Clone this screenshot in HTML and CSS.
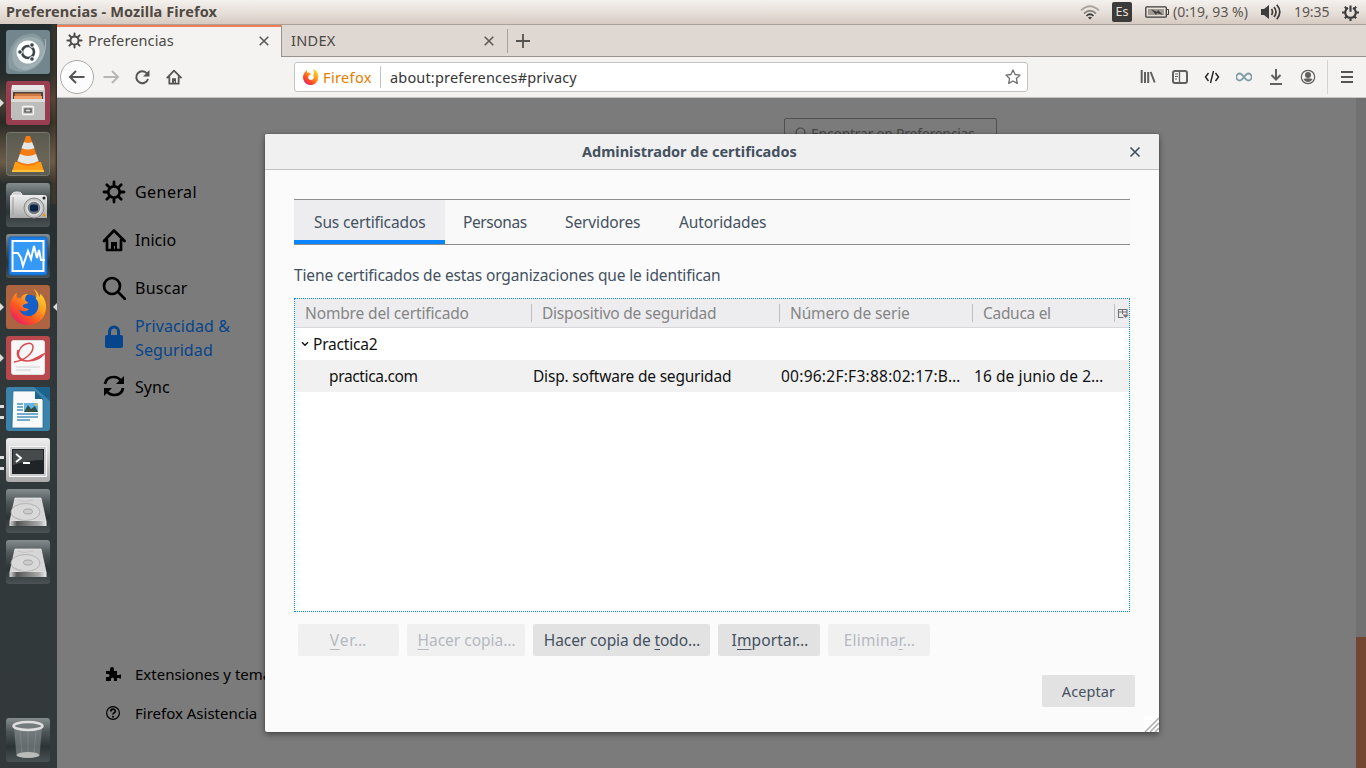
FILE: index.html
```html
<!DOCTYPE html>
<html lang="es">
<head>
<meta charset="utf-8">
<title>Preferencias - Mozilla Firefox</title>
<link rel="stylesheet" href="styles.css">
</head>
<body>
<svg class="defs" aria-hidden="true">
<defs>
<linearGradient id="glass" x1="0" y1="0" x2="0" y2="1"><stop offset="0" stop-color="#858d8f"/><stop offset=".3" stop-color="#505759"/><stop offset=".65" stop-color="#2c3335"/><stop offset="1" stop-color="#4a5254"/></linearGradient>
<linearGradient id="silver" x1="0" y1="0" x2="0" y2="1"><stop offset="0" stop-color="#eee"/><stop offset="1" stop-color="#aaa"/></linearGradient>
<linearGradient id="fox" x1="1" y1="0" x2=".2" y2="1"><stop offset="0" stop-color="#ffe93b"/><stop offset=".4" stop-color="#ffa21e"/><stop offset=".7" stop-color="#ff5522"/><stop offset="1" stop-color="#e3196b"/></linearGradient>
<linearGradient id="metal" x1="0" x2="1"><stop offset="0" stop-color="#ddd"/><stop offset=".2" stop-color="#555"/><stop offset=".8" stop-color="#aaa"/><stop offset="1" stop-color="#eee"/></linearGradient>
<symbol id="gear" viewBox="0 0 24 24"><circle cx="12" cy="12" r="5.700" fill="none" stroke="currentColor" stroke-width="2.700"/><path d="M12 2v3M12 19v3M2 12h3M19 12h3M4.800 4.800l2.300 2.300M16.900 16.900l2.300 2.300M4.800 19.200l2.300-2.300M16.900 7.100l2.300-2.300" stroke="currentColor" stroke-width="2.800" stroke-linecap="round"/></symbol>
<symbol id="home" viewBox="0 0 24 24"><path d="M2 13 12 2.500 22.500 13M5 12v10h14V12" fill="none" stroke="currentColor" stroke-width="2.700" stroke-linecap="round" stroke-linejoin="round"/><path d="M9 22v-8h6v8h-2v-4h-1v4z" fill="currentColor"/></symbol>
<symbol id="disk" viewBox="0 0 44 44"><path d="M9 9h26l5 23H4z" fill="#d6d6d6" stroke="#eee" stroke-width=".7"/><path d="M3.500 32h37v5h-37z" fill="url(#metal)"/><ellipse cx="19.500" cy="23" rx="14.500" ry="8.500" fill="#d9d9d9" stroke="#aaa" stroke-width=".8"/><ellipse cx="22" cy="22.500" rx="4.500" ry="2.500" fill="#ccc" stroke="#999" stroke-width=".8"/><path d="M12 11c6 3 12 0 15 0M6 28c3-1 5 2 10 2" fill="none" stroke="#bbb" stroke-width=".7"/></symbol>
<symbol id="flame" viewBox="0 0 40 40"><circle cx="21" cy="19" r="12" fill="#165fc9"/><path d="M26 1c4 5 3 8 2 10 5 4 4 15-4 18-7 2-12-2-13-6 4 3 8 1 10-1l-4-1c-3-1-3-3-1-4l4-1c0-2-3-2-3-4 0-3 1-4 3-6-5 0-7 3-8 5L8 10V5C4 8 1 14 1 21c0 10 8 18 19 18s19-8 19-19c0-7-3-11-6-14l-1 4c-1-5-3-7-6-9z" fill="url(#fox)"/></symbol>
</defs>
</svg>

<header class="panel">
  <span class="panel-title">Preferencias - Mozilla Firefox</span>
  <div class="indicators">
    <svg class="wifi" viewBox="0 0 20 16" width="20" height="16" fill="none"><path d="M1 6.500Q10-2 19 6.500" stroke="#aaa49d" stroke-width="1.700"/><path d="M4 9.500Q10 4 16 9.500" stroke="#8b8680" stroke-width="1.700"/><path d="M6.500 12Q10 8.500 13.500 12" stroke="#3c3c3c" stroke-width="1.700"/><path d="m8 13.500 2 2 2-2q-2-1.500-4 0" fill="#3c3c3c"/></svg>
    <span class="lang">Es</span>
    <svg class="battery" viewBox="0 0 24 12" width="24" height="12"><rect x=".8" y=".8" width="20.500" height="10.400" rx="1" fill="none" stroke="#3c3c3c" stroke-width="1.300"/><path d="M3 3h16v6H3z" fill="#a39c95"/><path d="M22 3.500h1.500v5H22" fill="none" stroke="#3c3c3c"/><path d="m6 3 6 3 1-2 5 5-6-2-1 2z" fill="#3c3c3c"/></svg>
    <span class="charge">(0:19, 93 %)</span>
    <svg class="volume" viewBox="0 0 20 18" width="20" height="18" fill="none" stroke="#3c3c3c" stroke-width="1.700"><path d="M0 6h3l5-4v14l-5-4H0z" fill="#3c3c3c" stroke="none"/><path d="M10.500 6q2 3 0 6M13 4q4 5 0 10M15.800 1.800q6 7 0 14.400"/></svg>
    <span class="clock">19:35</span>
    <svg class="session" viewBox="0 0 24 24" width="17" height="17" fill="none" stroke="#3c3c3c" stroke-width="3"><path d="M8.500 5.500a7.500 7.500 0 1 0 7 0M12 2v9M0 12h5M19 12h5M4 4l3 3M17 17l3 3M4 20l3-3M17 7l3-3M12 19v5"/></svg>
  </div>
</header>

<div class="desktop">
<aside class="launcher">
  <div class="apps">
    <svg class="app" viewBox="0 0 44 44"><rect width="44" height="44" rx="3" fill="#74868d"/><path d="M3 38C-1 15 13 2 29 4c9 3 12 14 8 24-5 12-22 18-34 10" fill="#879a9f"/><path d="M8 34C2 18 12 7 25 7s18 14 10 24-20 13-27 3" fill="#9babb0"/><path d="M39 9c3 15-7 28-22 29" fill="none" stroke="#adb9bc"/><circle cx="22" cy="22" r="11.500" fill="#fff"/><circle cx="22" cy="22" r="6" fill="none" stroke="#3b474d" stroke-width="2.600"/><g fill="#3b474d" stroke="#fff"><circle cx="14" cy="22" r="2.300"/><circle cx="26" cy="15" r="2.300"/><circle cx="26" cy="29" r="2.300"/></g></svg>
    <div class="slot running"><svg class="app" viewBox="0 0 44 44"><rect width="44" height="44" rx="3" fill="#993e51"/><path d="M6 4h32l1 6H5z" fill="#e7e7e5"/><path d="M5 9h34v28H5z" fill="#c6c6c3"/><path d="M7 11h30v8H7z" fill="#4c423b"/><path d="M9 12.500h26V19H8z" fill="#d07a42"/><path d="M8 15h28v4H8z" fill="#f0a068"/><path d="M5 18h34v21H6z" fill="#bdbdbb"/><path d="M5 18h34v3H5z" fill="#dcdcda"/><rect x="16.500" y="25.500" width="11" height="8" rx="1" fill="#bbb" stroke="#f5f5f5" stroke-width="1.300"/><path d="M19 28h6v3h-6z" fill="#ddd" stroke="#444" stroke-width="1.200"/></svg></div>
    <svg class="app" viewBox="0 0 44 44"><rect x=".5" y=".5" width="43" height="43" rx="3" fill="#6a6b62" fill-opacity=".65" stroke="#757770"/><path d="m9 30-3 10h32l-3-10z" fill="#ff9d15"/><path d="M20 4h4l9 26q-11 8-22 0z" fill="#f47c12"/><path d="m18 10-2.500 6q6 3 13 0L26 10q-4 2-8 0M14 22l-2.500 7q10 6 21 0L30 22q-8 4-16 0" fill="#e3e7e8"/><path d="M6 39h32" stroke="#ffc23a" stroke-width="2"/></svg>
    <svg class="app" viewBox="0 0 44 44"><rect width="44" height="44" rx="3" fill="url(#glass)"/><path d="M5 12h33q3 0 3 3v20H4V13z" fill="url(#silver)"/><path d="M6 12q0-3 5-3t5 3z" fill="#ccc" stroke="#eee"/><path d="M7 14v18" stroke="#999"/><circle cx="28" cy="25" r="10" fill="#c3c3c3" stroke="#888"/><circle cx="28" cy="25" r="7" fill="#747b81" stroke="#ddd" stroke-width="1.500"/><rect x="24" y="21.500" width="8" height="7" rx="2" fill="#0a2448"/><circle cx="38" cy="15" r="1.500" fill="#222"/><circle cx="38" cy="32" r="1.500" fill="#e8902a"/></svg>
    <svg class="app" viewBox="0 0 44 44"><rect width="44" height="44" rx="3" fill="url(#glass)"/><rect x="3" y="3" width="38" height="38" rx="2" fill="#1c7fe6" stroke="#1364bd"/><path d="M6.500 7h31v30h-31z" fill="#359af6" stroke="#fff" stroke-width="2"/><path d="M7 19h5l3 5 2 8 5-15 3 8 3-13 3 12 2-8 2 10h4" fill="none" stroke="#fff" stroke-width="2"/></svg>
    <div class="slot running focused"><svg class="app" viewBox="0 0 44 44"><rect width="44" height="44" rx="3" fill="#ac6540"/><use href="#flame" x="3" y="3" width="38" height="38"/></svg></div>
    <div class="slot running"><svg class="app" viewBox="0 0 44 44"><rect width="44" height="44" rx="3" fill="#b9484d"/><rect x="5.500" y="4.500" width="33" height="34" rx="2" fill="#f7f7f7" stroke="#ddd"/><path d="M8 26C20 24 27 17 27 11c0-6-10-4-13 2-4 7 0 11 7 12 6 0 12-5 17-7-4 5-10 7-17 7-8 0-11-5-9-11" fill="none" stroke="#d94b50" stroke-width="1.500"/><path d="M10 31h24M10 34h15" stroke="#d0d0d0"/></svg></div>
    <div class="slot double"><svg class="app" viewBox="0 0 44 44"><rect width="44" height="44" rx="3" fill="#3c83ab"/><path d="M7 4h22l8 9v28H6z" fill="#f8f9fa" stroke="#1c638b" stroke-width=".7"/><path d="M29 4v8h8M28 0h16v14z" fill="#1d638c"/><path d="M11 17h6M11 20h6M11 23h6M11 27h21M11 30h21M11 33h13" stroke="#4993bd" stroke-width="1.600"/><path d="M18 16h14v9H18z" fill="#65b5e5"/><path d="m18 25 4-7 3 4 4-3 3 6z" fill="#325143"/><circle cx="30.500" cy="17.500" r="1.200" fill="#f2c52e"/></svg></div>
    <div class="slot double"><svg class="app" viewBox="0 0 44 44"><rect width="44" height="44" rx="3" fill="url(#silver)"/><path d="M3.500 8.500h37v30h-37z" fill="#ccc" stroke="#f7f7f7"/><path d="M6 11h32v25H6z" fill="#202426"/><path d="M7 12h30v10q-14 0-30 5z" fill="#474a4b"/><path d="m10 16 5 4-5 4M17 25h7" fill="none" stroke="#fff" stroke-width="1.800"/></svg></div>
    <svg class="app" viewBox="0 0 44 44"><rect width="44" height="44" rx="3" fill="url(#glass)"/><use href="#disk" width="44" height="44"/></svg>
    <svg class="app" viewBox="0 0 44 44"><rect width="44" height="44" rx="3" fill="url(#glass)"/><use href="#disk" width="44" height="44"/></svg>
  </div>
  <svg class="app" viewBox="0 0 44 44"><rect width="44" height="44" rx="3" fill="url(#glass)"/><path d="m8 10 2.500 28q11 4 23 0L36 10z" fill="#8b9192" fill-opacity=".6"/><path d="m14 12 2 24M22 12v25M30 12l-2 24" stroke="#a3a8a8" stroke-opacity=".3"/><ellipse cx="22" cy="37" rx="11.500" ry="3" fill="#b9bcb9"/><ellipse cx="22" cy="8" rx="14.500" ry="4" fill="#737b7c" stroke="#dedede" stroke-width="2.500"/></svg>
</aside>

<main class="browser">
  <div class="tabstrip">
    <div class="tab active"><svg class="tab-gear" width="17" height="17"><use href="#gear"/></svg><span class="tab-name">Preferencias</span><svg class="tab-close" width="10" height="10" viewBox="0 0 10 10"><path d="m.7.7 8.600 8.600M9.300.7.7 9.300"/></svg></div>
    <div class="tab other"><span class="tab-index">INDEX</span><svg class="tab-close" width="10" height="10" viewBox="0 0 10 10"><path d="m.7.7 8.600 8.600M9.300.7.7 9.300"/></svg></div>
    <div class="newtab"><svg width="14" height="14" viewBox="0 0 14 14"><path d="M7 0v14M0 7h14" stroke="#55524f" stroke-width="1.800"/></svg></div>
  </div>
  <div class="navbar">
    <span class="back"><svg width="18" height="16" viewBox="0 0 18 16"><path d="M8 2 2 8l6 6M2 8h14.500"/></svg></span>
    <svg class="forward" width="18" height="16" viewBox="0 0 18 16"><path d="m10 2 6 6-6 6M16 8H1.500"/></svg>
    <svg class="reload" width="16" height="16" viewBox="0 0 16 16"><path d="M13 4.500a6 6 0 1 0 1 5.500"/><path d="M15.500 1v6.500H9z" fill="#555" stroke="none"/></svg>
    <svg class="gohome" width="16" height="16"><use href="#home"/></svg>
    <div class="urlbar">
      <svg width="16" height="16" viewBox="0 0 16 16"><path d="M4 1v3c2-1 3 0 4 1C7 6 7 7 8 8c3-1 4-4 2-8 5 2 6 6 5 10-1 4-4 6-8 6S0 12 0 8c0-3 2-5 4-7" fill="url(#fox)"/><circle cx="8" cy="8.200" r="2.700" fill="#fff"/></svg>
      <span class="brand">Firefox</span><span class="url">about:preferences#privacy</span>
      <svg class="star" width="16" height="16" viewBox="0 0 16 16"><path d="m8 1 2.100 4.500 4.900.6-3.600 3.400.9 4.900L8 12l-4.300 2.400.9-4.900L1 6.100l4.900-.6z" fill="none" stroke="#6c6c6c" stroke-width="1.300" stroke-linejoin="round"/></svg>
    </div>
    <div class="tools">
      <svg width="16" height="16" viewBox="0 0 16 16"><path d="M1.700 1v13M5 3v11M8.200 3v11m2.500-11 4 10.500"/></svg>
      <svg width="16" height="16" viewBox="0 0 16 16"><rect x="1" y="2" width="14" height="12" rx="2"/><path d="M7.500 2v12" stroke-width="1.300"/><path d="M3 5h3M3 7.500h3M3 10h2" stroke-width="1"/></svg>
      <svg width="16" height="16" viewBox="0 0 16 16"><path d="M4.500 4 1.500 8l3 4M11.500 4l3 4-3 4M9.500 2l-3 12" stroke="#202020" stroke-width="1.400"/></svg>
      <svg width="16" height="16" viewBox="0 0 16 16"><path d="M8 8C5.500 4.800 4.500 4.500 3.800 4.500a3.500 3.500 0 0 0 0 7C4.500 11.500 5.500 11.200 8 8s3.500-3.500 4.200-3.500a3.500 3.500 0 0 1 0 7C11.500 11.500 10.500 11.200 8 8" stroke="#7f9aa4" stroke-width="1.800"/></svg>
      <svg width="16" height="16" viewBox="0 0 16 16"><path d="M8 0v10M3.500 6 8 10.500 12.500 6M2 15h12"/></svg>
      <svg width="16" height="16" viewBox="0 0 16 16"><circle cx="8" cy="8" r="6.700" stroke-width="1.200"/><circle cx="8" cy="6" r="3" fill="#606060" stroke="none"/><path d="M3.500 10q4.500-1.500 9 0-1.500 3-4.500 3t-4.500-3" fill="#606060" stroke="none"/></svg>
    </div>
    <span class="menu"><svg width="12" height="14" viewBox="0 0 12 14"><path d="M0 2h12M0 7h12M0 12h12"/></svg></span>
  </div>

  <div class="page">
    <nav class="categories">
      <div class="cat"><svg width="24" height="24"><use href="#gear"/></svg><span class="t-general">General</span></div>
      <div class="cat"><svg width="24" height="24"><use href="#home"/></svg><span>Inicio</span></div>
      <div class="cat"><svg width="24" height="24" viewBox="0 0 24 24" fill="none" stroke="#000" stroke-width="2.700"><circle cx="10" cy="10" r="8"/><path d="m16 16 7 7" stroke-linecap="round"/></svg><span class="t-buscar">Buscar</span></div>
      <div class="cat selected"><svg width="24" height="24" viewBox="0 0 24 24"><rect x="3" y="10" width="18" height="13" rx="2" fill="#06458b"/><path d="M7.500 11V6.500a4.500 4.500 0 0 1 9 0V11" fill="none" stroke="#06458b" stroke-width="3"/></svg><span>Privacidad &amp;<br>Seguridad</span></div>
      <div class="cat sync"><svg width="24" height="24" viewBox="0 0 24 24" fill="none" stroke="#000" stroke-width="2.700"><path d="M3 10q1-7 9-7 5 0 8 5M21 14q-1 7-9 7-5 0-8-5"/><path d="M22 2v8h-8zM2 22v-8h8z" fill="#000" stroke="none"/></svg><span>Sync</span></div>
      <div class="cat small ext"><svg width="16" height="16" viewBox="0 0 16 16"><path d="M1 5h4V3a2 2 0 1 1 4 0v2h3v4h2a2 2 0 1 1 0 3h-2v3H9v-2a1.500 1.500 0 0 0-3 0v2H1v-4h2a1.500 1.500 0 0 0 0-3H1z" fill="#000"/></svg><span>Extensiones y temas</span></div>
      <div class="cat small"><svg width="16" height="16" viewBox="0 0 16 16" fill="none" stroke="#000"><circle cx="8" cy="8" r="6.400" stroke-width="1.200"/><path d="M5.800 6.500c0-3 4.500-3 4.500-.3 0 1.600-2.300 1.500-2.300 3.300" stroke-width="1.700"/><circle cx="8" cy="11.700" r="1" fill="#000" stroke="none"/></svg><span>Firefox Asistencia</span></div>
    </nav>
    <div class="search"><svg width="13" height="13" viewBox="0 0 13 13" fill="none" stroke="#454545" stroke-width="1.200"><circle cx="5.500" cy="5.500" r="4.500"/><path d="m9 9 3 3"/></svg><span>Encontrar en Preferencias</span></div>
    <div class="scrollbar"><div class="thumb"></div></div>
  </div>

  <section class="dialog">
    <div class="dialog-head"><h1>Administrador de certificados</h1><svg class="dialog-close" width="12" height="12" viewBox="0 0 12 12"><path d="m1.500 1.500 9 9M10.500 1.500l-9 9" stroke="#44515f" stroke-width="1.700"/></svg></div>
    <div class="dialog-body">
      <div class="cert-tabs"><span class="ct on">Sus certificados</span><span class="ct c2">Personas</span><span class="ct c3">Servidores</span><span class="ct c4">Autoridades</span></div>
      <p class="desc">Tiene certificados de estas organizaciones que le identifican</p>
      <div class="tree">
        <div class="cols head"><span class="h1">Nombre del certificado</span><span class="h2">Dispositivo de seguridad</span><span class="h3">Número de serie</span><span class="h4">Caduca el</span><span class="picker"><svg width="12" height="11" viewBox="0 0 12 11"><path d="M1 1.500h9V6M1 4h9M1.500 1v8.500h5M5.500 1v5" fill="none" stroke="#747474" stroke-width="1.100"/><path d="M5.500 6.500H12L8.700 10z" fill="#747474"/></svg></span></div>
        <div class="row parent"><svg width="8" height="6" viewBox="0 0 8 6"><path d="m1 1.200 3 3 3-3" fill="none" stroke="#111" stroke-width="1.400"/></svg><span>Practica2</span></div>
        <div class="cols row child"><span class="d1">practica.com</span><span class="d2">Disp. software de seguridad</span><span class="d3">00:96:2F:F3:88:02:17:B…</span><span class="d4">16 de junio de 2…</span></div>
      </div>
      <div class="buttons">
        <button class="btn b1" disabled><u>V</u>er…</button><button class="btn b2" disabled><u>H</u>acer copia…</button><button class="btn b3">Hacer copia de <u>t</u>odo…</button><button class="btn b4">I<u>m</u>portar…</button><button class="btn b5" disabled>Elimina<u>r</u>…</button>
      </div>
      <div class="confirm"><button class="btn accept">Aceptar</button></div>
    </div>
    <svg class="grip" width="15" height="16" viewBox="0 0 15 16"><path d="M0 0h15v16H0z" fill="#fff"/><path d="M1 16 15 2M6 16l9-9M11 16l4-4" stroke="#aaa" stroke-width="1.500"/></svg>
  </section>
</main>
</div>
</body>
</html>
```
FILE: styles.css
```css
* { box-sizing: border-box; }
body { margin: 0; width: 1366px; height: 768px; overflow: hidden; font-family: "Noto Sans", "Open Sans", sans-serif; font-size: 14px; color: #4a4845; display: flex; flex-direction: column; }
span, h1, button, p { white-space: nowrap; }
svg { flex: none; display: block; }
.defs { position: absolute; width: 0; height: 0; }

.panel { height: 24px; flex: none; display: flex; justify-content: space-between; align-items: center; background: linear-gradient(#f4f1ee, #e7e0da 50%, #d5cbc2); padding: 0 8px 0 6px; }
.panel-title { font-weight: 700; font-size: 14.5px; letter-spacing: .12px; padding-bottom: 2px; color: #504943; }
.indicators { display: flex; align-items: center; color: #5d5650; font-size: 14px; margin-right: -1px; }
.lang { width: 20px; height: 20px; background: #3c3b3a; color: #e9e3de; border-radius: 2px; font-size: 12.5px; line-height: 20px; text-align: center; margin: 0 13px 0 12px; }
.charge { width: 76px; margin: 0 12px 0 4px; padding-bottom: 2px; letter-spacing: 0; }
.clock { width: 36px; margin: 0 12px 0 13px; padding-bottom: 2px; letter-spacing: -.1px; }

.desktop { flex: 1; display: flex; min-height: 0; }
.launcher { width: 57px; flex: none; padding: 6px 0 6px 6px; display: flex; flex-direction: column; justify-content: space-between; background: linear-gradient(90deg, transparent 85%, #7c573444 96%, #302a25 100%) 0 0 / 57px 180px no-repeat, linear-gradient(#202a2c 0, #242b2b 50px, #4b4236 75px, #2b2925 98px, #594f40 125px, #6b5b46 138px, #292e2d 160px, #283033 220px, #30383a 330px, #33393b); }
.apps { display: flex; flex-direction: column; gap: 7px; }
.app { width: 44px; height: 44px; }
.slot { position: relative; width: 51px; }
.running::before, .focused::after { content: ""; position: absolute; left: -6px; top: 18px; border: 4px solid transparent; border-left-color: #dcdcdc; border-right: 0; }
.focused::after { left: 47px; border-left: 0; border-right: 4px solid #dcdcdc; }
.double::before { content: ""; position: absolute; left: -6px; top: 18px; width: 4px; height: 8px; border: solid #ddd; border-width: 3px 0; }

.browser { position: relative; flex: 1; display: flex; flex-direction: column; min-width: 0; }
.tabstrip { height: 33px; flex: none; display: flex; background: #dfd7d1; border-top: 1px solid #a9a19a; }
.tab { display: flex; align-items: center; }
.active { width: 225px; background: #f4f3f2; border-top: 2px solid #ef7f56; border-right: 1px solid #99918b; padding: 0 12px 3px 9px; }
.other { width: 225px; padding: 0 13px 0 9px; border-bottom: 1px solid #99918b; }
.tab-gear { color: #4a4a4a; }
.tab-name { margin-left: 5px; padding-bottom: 2px; font-size: 14.5px; letter-spacing: .12px; }
.tab-index { padding-bottom: 2px; font-size: 14.5px; letter-spacing: .3px; }
.tab-close { margin-left: auto; fill: none; stroke: #5d5a57; stroke-width: 1.6; }
.newtab { flex: 1; display: flex; align-items: center; padding-left: 9px; border-bottom: 1px solid #99918b; background: linear-gradient(#aaa39c, #aaa39c) 0 4px / 1px 24px no-repeat; }

.navbar { height: 41px; flex: none; background: #f4f3f2; border-bottom: 1px solid #c6c5c4; display: flex; align-items: center; fill: none; stroke: #555; stroke-width: 2; }
.back { width: 34px; height: 34px; margin-left: 3px; border: 1px solid #aaa; border-radius: 50%; background: #fcfcfc; display: grid; place-items: center; }
.forward { margin-left: 8px; stroke: #b8b7b6; }
.reload { margin-left: 14px; }
.gohome { margin-left: 16px; color: #555; stroke: none; }
.urlbar { stroke: none; width: 734px; height: 30px; margin-left: 112px; border: 1px solid #c5c2bf; border-radius: 3px; background: #fff; display: flex; align-items: center; padding: 0 6px 0 8px; }
.brand { color: #e87c00; width: 58px; height: 22px; line-height: 22px; margin-left: 4px; border-right: 1px solid #c4c4c4; font-size: 14.5px; letter-spacing: .35px; }
.url { margin-left: 9px; color: #363636; font-size: 14.5px; letter-spacing: .17px; }
.star { margin-left: auto; }
.tools { display: flex; gap: 16px; margin-left: 112px; stroke: #606060; }
.menu { margin-left: 11px; padding-left: 13px; height: 34px; border-left: 1px solid #d4d3d2; display: flex; align-items: center; }

.page { flex: 1; background: #7b7b7b; display: flex; justify-content: space-between; align-items: flex-start; min-height: 0; }
.categories { width: 300px; padding: 70px 0 0 44.5px; color: #000; font-size: 16px; }
.cat { display: flex; align-items: center; gap: 9.5px; height: 48px; line-height: 24px; letter-spacing: .05px; }
.t-general { letter-spacing: .45px; }
.t-buscar { letter-spacing: .25px; }
.cat svg { color: #000; }
.selected { color: #06458b; height: 50px; letter-spacing: .1px; }
.selected span { padding-top: 1px; }
.sync span { padding-top: 1px; }
.small { font-size: 15px; height: 39px; padding-left: 3.5px; gap: 14px; letter-spacing: 0; }
.ext { margin-top: 244px; }
.search { width: 213px; height: 32px; margin: 20px 359px 0 auto; border: 1px solid #505050; border-radius: 2px; padding: 0 0 2px 10px; display: flex; align-items: center; gap: 3px; color: #454545; }
.search span { letter-spacing: -.25px; }
.scrollbar { width: 10px; height: 100%; background: #717171; padding-top: 539px; }
.thumb { height: 131px; background: #734631; }

.dialog { position: absolute; left: 208px; top: 110px; width: 894px; height: 598px; background: #fbfbfb; border-radius: 2px; box-shadow: 0 2px 6px #0007, 0 0 1px #0009; color: #44515f; }
.dialog-head { height: 36px; border-bottom: 1px solid #c2c2c2; background: #f0f0f0; border-radius: 2px 2px 0 0; display: grid; grid-template-columns: 317px 214px 1fr; align-items: center; }
.dialog-head h1 { grid-column: 2; margin: 0 0 1px; font-size: 14.5px; letter-spacing: 0; }
.dialog-close { justify-self: end; margin-right: 18px; }
.dialog-body { padding: 29px 29px 0; font-size: 15px; }
.cert-tabs { height: 46px; border: solid #8e8e8e; border-width: 1px 0; background: #f9f9f9; display: flex; font-size: 15.5px; letter-spacing: -.13px; }
.ct { line-height: 44px; }
.on { width: 151px; padding-left: 20px; background: #ededf0; box-shadow: inset 0 -4px #0a84ff; }
.c2 { width: 102px; padding-left: 18px; letter-spacing: -.4px; }
.c3 { width: 114px; padding-left: 18px; }
.c4 { padding-left: 18px; }
.desc { margin: 18px 0 11px; line-height: 24px; font-size: 15.5px; letter-spacing: -.14px; }
.tree { height: 314px; border: 1px dotted #0a84ff; background: #fff; background-clip: padding-box; color: #111; font-size: 15.5px; }
.cols { display: grid; grid-template-columns: 236px 248px 193px 142px 15px; align-items: center; }
.head { height: 29px; background: #ededf0; border-bottom: 1px solid #d7d7db; color: #858585; letter-spacing: -.14px; }
.head span { padding-left: 10px; height: 18px; line-height: 19px; border-left: 1px solid #c0c0c0; }
.head .h1 { border-left: 0; }
.head .h2 { letter-spacing: -.22px; }
.head .h4 { letter-spacing: -.3px; }
.head .picker { padding: 4px 0 0 2px; }
.row { height: 32px; letter-spacing: -.2px; }
.parent { display: flex; align-items: center; padding-left: 6px; gap: 4px; }
.child { background: #f1f1f1; }
.d1 { padding-left: 34px; letter-spacing: -.35px; }
.d2, .d3, .d4 { padding-left: 2px; }
.d3 { letter-spacing: .25px; }
.d4 { letter-spacing: .08px; }
.buttons { display: flex; gap: 8px; padding: 12px 4px 0; }
.btn { height: 32px; border: 0; border-radius: 2px; padding: 0; background: #e2e2e2; color: #44515f; font: 15.5px "Noto Sans", "Open Sans", sans-serif; letter-spacing: 0; text-align: center; }
.btn:disabled { background: #f0f0f1; color: #b5b9be; }
.btn u { text-decoration-thickness: 1px; text-underline-offset: 3px; }
.b1 { width: 101px; letter-spacing: .9px; }
.b2 { width: 118px; padding-left: 1px; }
.b3 { width: 177px; padding-left: 1px; letter-spacing: -.1px; }
.b4 { width: 102px; padding-left: 2px; letter-spacing: .15px; }
.b5 { width: 102px; padding-left: 1px; letter-spacing: .2px; }
.confirm { display: flex; justify-content: flex-end; padding-top: 19px; margin-right: -5px; }
.accept { width: 93px; font-size: 14.5px; letter-spacing: .1px; }
.grip { position: absolute; right: 0; bottom: 0; }
```
